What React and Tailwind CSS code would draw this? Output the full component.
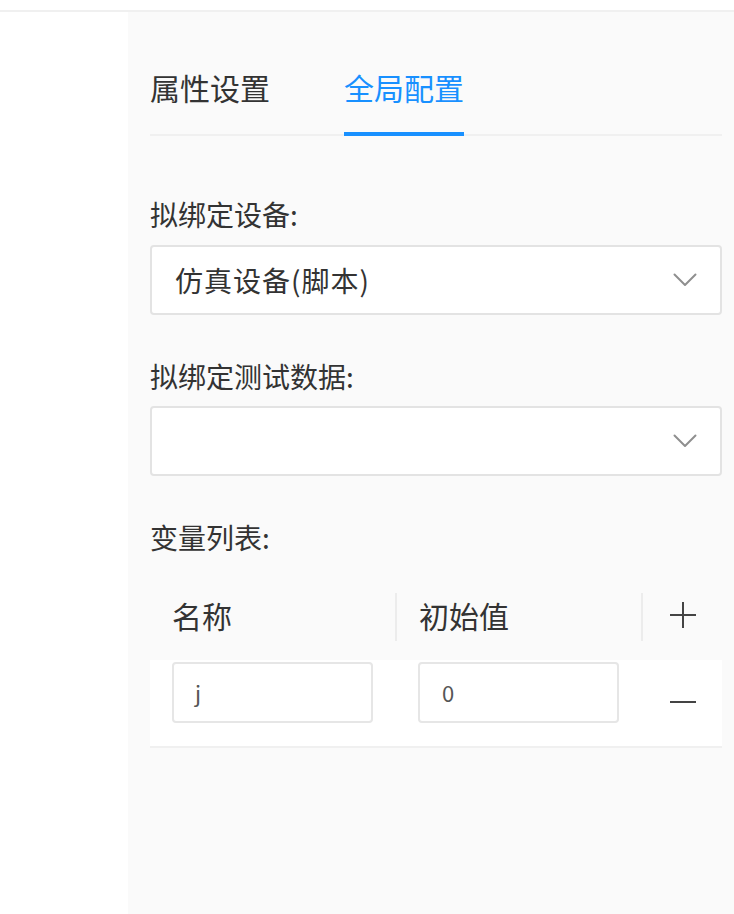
import React from "react";

const font = { fontFamily: '"Noto Sans CJK SC", "Noto Sans", sans-serif' };

function Chevron() {
  return (
    <svg width="24" height="14" viewBox="0 0 24 14" fill="none" className="shrink-0">
      <path d="M1.5 1.5 L12 12 L22.5 1.5" stroke="#8f8f8f" strokeWidth="2" strokeLinecap="round" strokeLinejoin="round" />
    </svg>
  );
}

function Select({ value }) {
  return (
    <div className="flex h-[70px] items-center justify-between rounded-[4px] border-2 border-[#e3e3e3] bg-white pl-[23px] pr-[23px]">
      <span className="text-[28px] leading-[40px] tracking-[1px] text-[#333]">{value}</span>
      <Chevron />
    </div>
  );
}

export default function App() {
  return (
    <div className="min-h-[914px] w-full bg-white" style={font}>
      <div className="h-[10px] bg-white" />
      <div className="h-[2px] bg-[#f0f0f0]" />
      <div className="flex min-h-[902px]">
        <div className="w-[128px] shrink-0 bg-white" />
        <div className="flex-1 bg-[#fafafa] pl-[22px] pr-[12px] pt-[53px]">
          {/* tabs */}
          <div className="flex items-start gap-[74px] border-b-2 border-[#f0f0f0]">
            <div className="pb-[25px] text-[30px] leading-[44px] text-[#333]">属性设置</div>
            <div className="-mb-[2px] border-b-4 border-[#1890ff] pb-[23px] text-[30px] leading-[44px] text-[#1890ff]">全局配置</div>
          </div>

          <div className="mt-[58px] text-[28px] leading-[40px] text-[#333]">拟绑定设备:</div>
          <div className="mt-[11px]">
            <Select value="仿真设备(脚本)" />
          </div>

          <div className="mt-[41px] text-[28px] leading-[40px] text-[#333]">拟绑定测试数据:</div>
          <div className="mt-[10px]">
            <Select value="" />
          </div>

          <div className="mt-[41px] text-[28px] leading-[40px] text-[#333]">变量列表:</div>

          {/* table */}
          <div className="mt-[17px]">
            <div className="grid h-[86px] grid-cols-[245px_246px_1fr] items-center">
              <div className="flex h-[48px] items-center pb-[4px] pl-[22px] text-[30px] text-[#333]">名称</div>
              <div className="flex h-[48px] items-center border-l-2 border-[#ececec] pb-[4px] pl-[22px] text-[30px] text-[#333]">初始值</div>
              <div className="flex h-[48px] items-center justify-center border-l-2 border-[#ececec] pb-[4px]">
                <svg width="26" height="26" viewBox="0 0 26 26">
                  <path d="M13 0 V26 M0 13 H26" stroke="#444" strokeWidth="2" />
                </svg>
              </div>
            </div>
            <div className="grid h-[88px] grid-cols-[245px_246px_1fr] border-b-2 border-[#f0f0f0] bg-white pt-[2px]">
              <div className="pl-[22px] pr-[22px]">
                <div className="flex h-[61px] items-center rounded-[4px] border-2 border-[#e6e6e6] bg-white pl-[21px] text-[22px] text-[#555]">j</div>
              </div>
              <div className="pl-[23px] pr-[22px]">
                <div className="flex h-[61px] items-center rounded-[4px] border-2 border-[#e6e6e6] bg-white pl-[22px] text-[22px] text-[#555]">0</div>
              </div>
              <div className="flex justify-center pt-[39px]">
                <svg width="26" height="2" viewBox="0 0 26 2" className="ml-[3px]">
                  <path d="M0 1 H26" stroke="#444" strokeWidth="2" />
                </svg>
              </div>
            </div>
          </div>
        </div>
      </div>
    </div>
  );
}
